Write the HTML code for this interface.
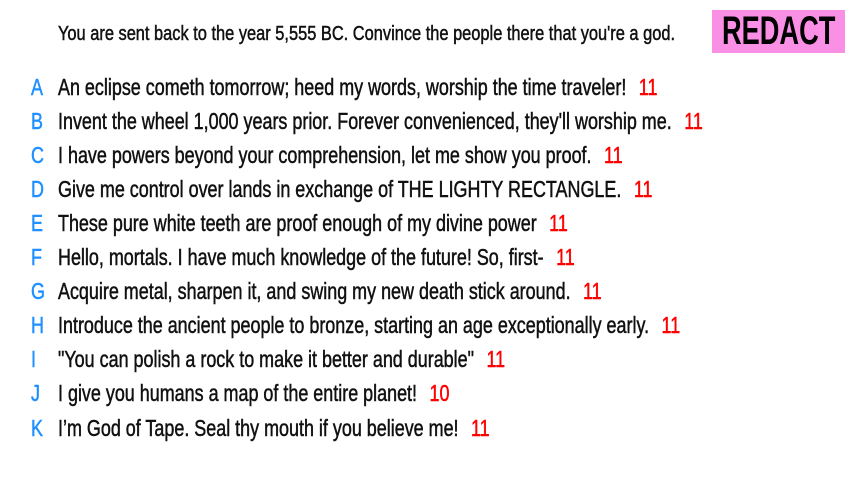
<!DOCTYPE html>
<html><head><meta charset="utf-8"><style>
body{margin:0;width:853px;height:480px;background:#fff;overflow:hidden;position:relative;font-family:"Liberation Sans",sans-serif;color:#111}
.t{position:absolute;white-space:nowrap;transform-origin:0 50%;transform:scaleX(.78);-webkit-text-stroke:0.5px currentColor}
.title{left:58px;top:22px;font-size:20px;line-height:24px;transform:scaleX(.82)}
.row{left:58px;font-size:23px;line-height:28px}
.l{position:absolute;left:31px;font-size:23px;line-height:28px;color:#1e90ff;transform:scaleX(.78);transform-origin:0 50%;-webkit-text-stroke:0.5px currentColor}
.n{color:#f00;margin-left:16px}
.box{position:absolute;left:712px;top:10px;width:133px;height:43px;background:#fa8fe6}
.red{position:absolute;left:722px;top:10px;font-size:40px;line-height:43px;font-weight:bold;color:#000;transform:scaleX(.68);transform-origin:0 50%;white-space:nowrap}
</style></head><body>
<div class="t title">You are sent back to the year 5,555 BC. Convince the people there that you're a god.</div>
<div class="box"></div><div class="red">REDACT</div>

<div class="l" style="top:73px">A</div><div class="t row" style="top:73px">An eclipse cometh tomorrow; heed my words, worship the time traveler!<span class="n">11</span></div>
<div class="l" style="top:107px">B</div><div class="t row" style="top:107px">Invent the wheel 1,000 years prior. Forever convenienced, they'll worship me.<span class="n">11</span></div>
<div class="l" style="top:141px">C</div><div class="t row" style="top:141px">I have powers beyond your comprehension, let me show you proof.<span class="n">11</span></div>
<div class="l" style="top:175px">D</div><div class="t row" style="top:175px">Give me control over lands in exchange of THE LIGHTY RECTANGLE.<span class="n">11</span></div>
<div class="l" style="top:209px">E</div><div class="t row" style="top:209px">These pure white teeth are proof enough of my divine power<span class="n">11</span></div>
<div class="l" style="top:243px">F</div><div class="t row" style="top:243px">Hello, mortals. I have much knowledge of the future! So, first-<span class="n">11</span></div>
<div class="l" style="top:277px">G</div><div class="t row" style="top:277px">Acquire metal, sharpen it, and swing my new death stick around.<span class="n">11</span></div>
<div class="l" style="top:311px">H</div><div class="t row" style="top:311px">Introduce the ancient people to bronze, starting an age exceptionally early.<span class="n">11</span></div>
<div class="l" style="top:345px">I</div><div class="t row" style="top:345px">"You can polish a rock to make it better and durable"<span class="n">11</span></div>
<div class="l" style="top:379px">J</div><div class="t row" style="top:379px">I give you humans a map of the entire planet!<span class="n">10</span></div>
<div class="l" style="top:414px">K</div><div class="t row" style="top:414px">I’m God of Tape. Seal thy mouth if you believe me!<span class="n">11</span></div>
</body></html>
